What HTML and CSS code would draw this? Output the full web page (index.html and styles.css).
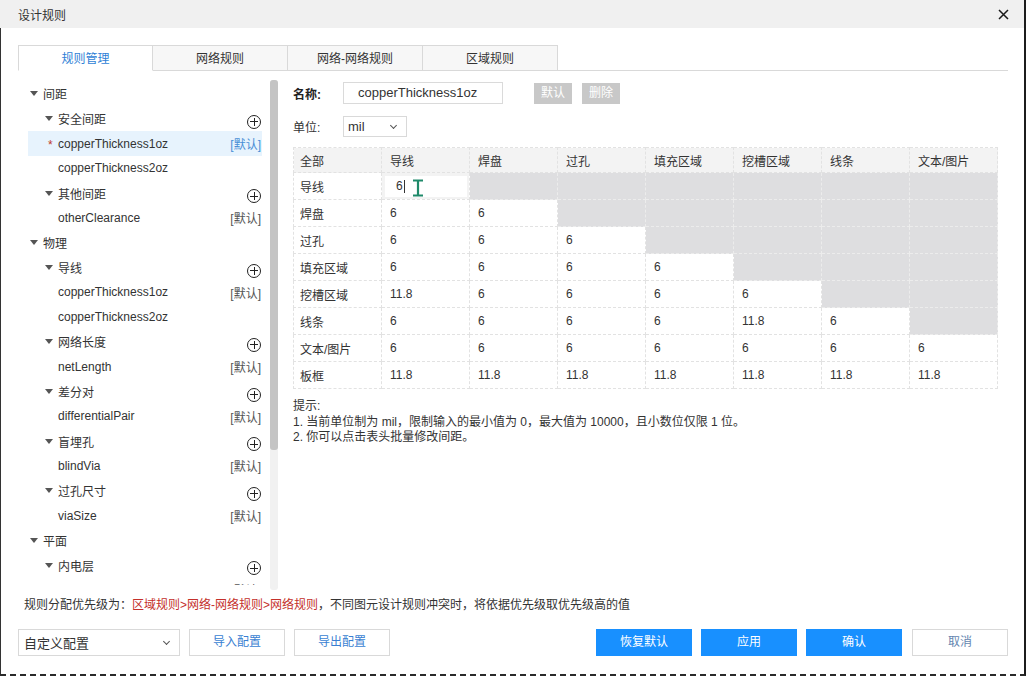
FILE: index.html
```html
<!DOCTYPE html>
<html lang="zh-CN">
<head>
<meta charset="utf-8">
<title>设计规则</title>
<link rel="stylesheet" href="styles.css">
</head>
<body>
<div class="win">
  <div class="titlebar">
    <span class="title">设计规则</span>
    <svg class="close" width="11" height="11" viewBox="0 0 11 11"><path d="M1 1L10 10M10 1L1 10" stroke="#1a1a1a" stroke-width="1.5" fill="none"/></svg>
  </div>
  <div class="body">
    <div class="tabs">
      <div class="tab active">规则管理</div>
      <div class="tab">网络规则</div>
      <div class="tab">网络-网络规则</div>
      <div class="tab">区域规则</div>
    </div>
    <div class="main">
      <div class="left">
        <div class="tree">
          <div class="row l0"><i class="tri"></i><span class="name">间距</span></div>
          <div class="row l1"><i class="tri"></i><span class="name">安全间距</span><span class="plus"></span></div>
          <div class="row leaf selected"><span class="star">*</span><span class="name">copperThickness1oz</span><span class="def">[默认]</span></div>
          <div class="row leaf"><span class="name">copperThickness2oz</span></div>
          <div class="row l1"><i class="tri"></i><span class="name">其他间距</span><span class="plus"></span></div>
          <div class="row leaf"><span class="name">otherClearance</span><span class="def">[默认]</span></div>
          <div class="row l0"><i class="tri"></i><span class="name">物理</span></div>
          <div class="row l1"><i class="tri"></i><span class="name">导线</span><span class="plus"></span></div>
          <div class="row leaf"><span class="name">copperThickness1oz</span><span class="def">[默认]</span></div>
          <div class="row leaf"><span class="name">copperThickness2oz</span></div>
          <div class="row l1"><i class="tri"></i><span class="name">网络长度</span><span class="plus"></span></div>
          <div class="row leaf"><span class="name">netLength</span><span class="def">[默认]</span></div>
          <div class="row l1"><i class="tri"></i><span class="name">差分对</span><span class="plus"></span></div>
          <div class="row leaf"><span class="name">differentialPair</span><span class="def">[默认]</span></div>
          <div class="row l1"><i class="tri"></i><span class="name">盲埋孔</span><span class="plus"></span></div>
          <div class="row leaf"><span class="name">blindVia</span><span class="def">[默认]</span></div>
          <div class="row l1"><i class="tri"></i><span class="name">过孔尺寸</span><span class="plus"></span></div>
          <div class="row leaf"><span class="name">viaSize</span><span class="def">[默认]</span></div>
          <div class="row l0"><i class="tri"></i><span class="name">平面</span></div>
          <div class="row l1"><i class="tri"></i><span class="name">内电层</span><span class="plus"></span></div>
          <div class="row leaf"><span class="name">innerPlane</span><span class="def">[默认]</span></div>
        </div>
        <div class="scrollbar"><div class="thumb"></div></div>
      </div>
      <div class="right">
        <div class="field">
          <span class="lbl strong">名称:</span>
          <div class="input">copperThickness1oz</div>
          <span class="gbtn first">默认</span>
          <span class="gbtn">删除</span>
        </div>
        <div class="field unit">
          <span class="lbl">单位:</span>
          <div class="select small"><span>mil</span><i class="chev"></i></div>
        </div>
        <table class="grid">
          <thead>
            <tr><th>全部</th><th>导线</th><th>焊盘</th><th>过孔</th><th>填充区域</th><th>挖槽区域</th><th>线条</th><th>文本/图片</th></tr>
          </thead>
          <tbody>
            <tr><td class="rh">导线</td><td class="edit"><div class="editbox">6<span class="caret"></span></div><svg class="ibeam" width="12" height="18" viewBox="0 0 12 18"><path d="M1 1.5H11M1 16.5H11M6 1.5V16.5" stroke="#1f8a6a" stroke-width="2.2" fill="none"/></svg></td><td class="g"></td><td class="g"></td><td class="g"></td><td class="g"></td><td class="g"></td><td class="g"></td></tr>
            <tr><td class="rh">焊盘</td><td>6</td><td>6</td><td class="g"></td><td class="g"></td><td class="g"></td><td class="g"></td><td class="g"></td></tr>
            <tr><td class="rh">过孔</td><td>6</td><td>6</td><td>6</td><td class="g"></td><td class="g"></td><td class="g"></td><td class="g"></td></tr>
            <tr><td class="rh">填充区域</td><td>6</td><td>6</td><td>6</td><td>6</td><td class="g"></td><td class="g"></td><td class="g"></td></tr>
            <tr><td class="rh">挖槽区域</td><td>11.8</td><td>6</td><td>6</td><td>6</td><td>6</td><td class="g"></td><td class="g"></td></tr>
            <tr><td class="rh">线条</td><td>6</td><td>6</td><td>6</td><td>6</td><td>11.8</td><td>6</td><td class="g"></td></tr>
            <tr><td class="rh">文本/图片</td><td>6</td><td>6</td><td>6</td><td>6</td><td>6</td><td>6</td><td>6</td></tr>
            <tr><td class="rh">板框</td><td>11.8</td><td>11.8</td><td>11.8</td><td>11.8</td><td>11.8</td><td>11.8</td><td>11.8</td></tr>
          </tbody>
        </table>
        <div class="hint">
          <p>提示:</p>
          <p>1. 当前单位制为 mil，限制输入的最小值为 0，最大值为 10000，且小数位仅限 1 位。</p>
          <p>2. 你可以点击表头批量修改间距。</p>
        </div>
      </div>
    </div>
    <div class="notice">规则分配优先级为：<span class="red">区域规则&gt;网络-网络规则&gt;网络规则</span>，不同图元设计规则冲突时，将依据优先级取优先级高的值</div>
    <div class="actions">
      <div class="select config"><span>自定义配置</span><i class="chev"></i></div>
      <span class="btn">导入配置</span>
      <span class="btn">导出配置</span>
      <span class="spacer"></span>
      <span class="btn primary">恢复默认</span>
      <span class="btn primary">应用</span>
      <span class="btn primary">确认</span>
      <span class="btn cancel">取消</span>
    </div>
  </div>
</div>
</body>
</html>
```
FILE: styles.css
```css
* { box-sizing: border-box; margin: 0; padding: 0; }
html, body { width: 1026px; height: 676px; overflow: hidden; background: #fff; }
body { font-family: "Liberation Sans", "Noto Sans CJK SC", sans-serif; font-size: 12px; color: #333; }

.win { width: 1026px; height: 676px; display: flex; flex-direction: column; border-right: 2px solid #1c1c1c; border-bottom: 2px dashed #2a2a2a; }

.titlebar { flex: none; height: 28px; background: #f0f0f0; display: flex; align-items: center; justify-content: space-between; padding: 0 15px 0 18px; }
.title { font-size: 12px; color: #333; }
.close { display: block; }

.body { flex: 1; border-left: 1px solid #333; padding: 17px 16px 0 17px; display: flex; flex-direction: column; }

.tabs { display: flex; height: 26px; border-bottom: 1px solid #d9d9d9; flex: none; }
.tab { width: 135px; height: 26px; line-height: 26px; text-align: center; border: 1px solid #d9d9d9; border-left: none; background: #f7f7f7; color: #333; margin-bottom: -1px; }
.tab:first-child { border-left: 1px solid #d9d9d9; }
.tab.active { background: #fff; border-bottom-color: #fff; color: #2f7fd6; }

.main { height: 521px; display: flex; flex: none; }

.left { width: 275px; display: flex; flex: none; }
.tree { width: 252px; height: 514px; overflow: hidden; padding: 10.6px 8px 0 10px; }
.row { height: 24.8px; display: flex; align-items: center; padding-right: 1px; }
.row.l0 { padding-left: 2px; }
.row.l1 { padding-left: 17px; }
.row.leaf { padding-left: 30px; }
.row.selected { background: #e7f3fd; }
.tri { width: 0; height: 0; border-left: 4px solid transparent; border-right: 4px solid transparent; border-top: 5px solid #555; margin-right: 5px; }
.name { flex: 1; color: #333; white-space: nowrap; }
.star { color: #c0392b; width: 0; position: relative; left: -10px; margin-top: 3px; }
.def { color: #555; }
.selected .def { color: #4a8fd6; }
.plus { width: 14px; height: 14px; border: 1px solid #222; border-radius: 50%; position: relative; margin-top: 6px; }
.plus::before { content: ""; position: absolute; left: 2px; right: 2px; top: 5.5px; height: 1px; background: #222; }
.plus::after { content: ""; position: absolute; top: 2px; bottom: 2px; left: 5.5px; width: 1px; background: #222; }

.scrollbar { width: 8px; height: 510px; margin-top: 9px; background: #f1f1f1; border-radius: 3px; }
.thumb { height: 370px; background: #c4c4c4; border-radius: 3px; }

.right { flex: 1; padding-top: 11px; }
.field { display: flex; align-items: center; height: 22px; }
.field.unit { margin-top: 12px; height: 21px; }
.lbl { width: 50px; color: #333; }
.lbl.strong { font-weight: bold; color: #222; }
.input { width: 160px; height: 22px; border: 1px solid #dadada; padding-left: 14px; line-height: 20px; font-size: 13px; color: #333; }
.gbtn { width: 38px; height: 21px; line-height: 21px; text-align: center; background: #c8c8c8; color: #fff; margin-left: 10px; }
.gbtn.first { margin-left: 31px; }

.select { border: 1px solid #d9d9d9; display: flex; align-items: center; justify-content: space-between; background: #fff; }
.select.small { width: 64px; height: 21px; padding: 0 10px 0 4px; font-size: 13px; }
.chev { width: 5px; height: 5px; border-right: 1px solid #555; border-bottom: 1px solid #555; transform: rotate(45deg); margin-top: -3px; }

.grid { margin-top: 10px; width: 705px; border-collapse: collapse; table-layout: fixed; }
.grid th, .grid td { width: 88px; border: 1px dashed #e2e2e2; text-align: left; padding: 0 0 0 8px; font-weight: normal; white-space: nowrap; color: #333; }
.grid th { height: 25px; background: #f3f3f3; }
.grid th:first-child, .grid td.rh { padding-left: 6px; }
.grid td { height: 27px; }
.grid td.g { background: #dedee0; border-color: #ececec; }
.grid td.edit { background: #f3f3f3; position: relative; padding: 0 2px 0 3px; }
.editbox { height: 21px; background: #fff; padding-left: 11px; line-height: 21px; display: flex; align-items: center; }
.caret { width: 1px; height: 13px; background: #333; margin-left: 1px; }
.ibeam { position: absolute; left: 30px; top: 6px; }

.hint { margin-top: 10px; line-height: 15.5px; color: #333; }

.notice { flex: none; margin-top: 3px; height: 20px; line-height: 20px; padding-left: 6px; color: #333; }
.red { color: #c4302b; }

.actions { flex: none; margin-top: 14px; height: 27px; display: flex; }
.select.config { width: 162px; height: 27px; padding: 0 10px 0 5px; font-size: 13px; }
.btn { width: 96px; height: 27px; line-height: 25px; text-align: center; border: 1px solid #d9d9d9; background: #fff; color: #3a7fd2; margin-left: 9px; font-size: 12px; }
.spacer { flex: 1; }
.btn.primary { background: #1890ff; border-color: #1890ff; color: #fff; margin-left: 9px; }
.btn.cancel { color: #6486b0; margin-left: 10px; }
```
